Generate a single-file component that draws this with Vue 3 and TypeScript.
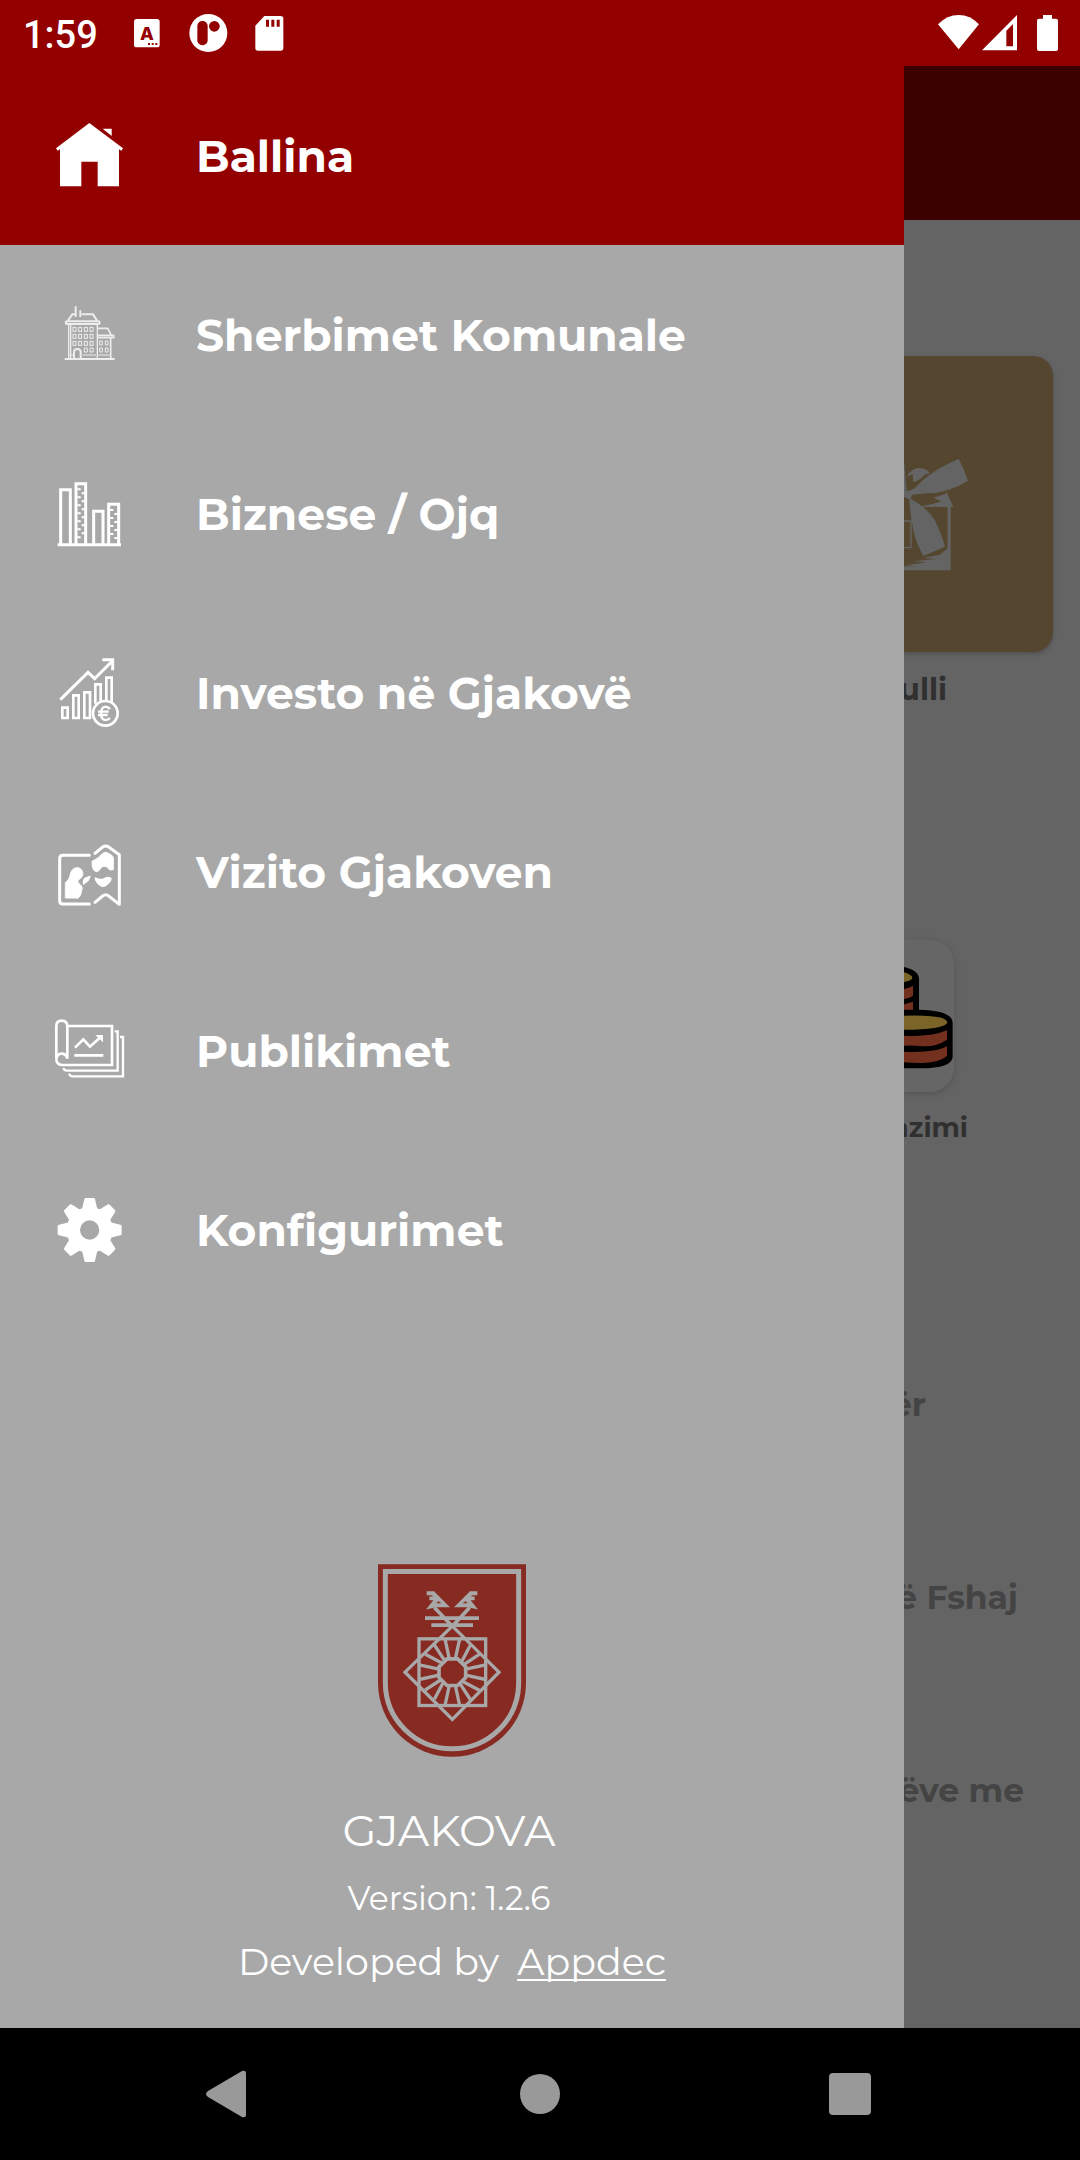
<script setup lang="ts">
interface MenuItem {
  id: string
  label: string
  viewBox: string
}

const items: MenuItem[] = [
  { id: 'home', label: 'Ballina', viewBox: '90 286 360 360' },
  { id: 'services', label: 'Sherbimet Komunale', viewBox: '0 -16 360 360' },
  { id: 'business', label: 'Biznese / Ojq', viewBox: '0 -20 360 360' },
  { id: 'invest', label: 'Investo në Gjakovë', viewBox: '0 -22 360 360' },
  { id: 'visit', label: 'Vizito Gjakoven', viewBox: '0 -25 360 360' },
  { id: 'publications', label: 'Publikimet', viewBox: '0 511 360 360' },
  { id: 'settings', label: 'Konfigurimet', viewBox: '0 1048 360 360' },
]

const active = 'home'
const teeth = [0, 45, 90, 135, 180, 225, 270, 315]
const quarters = [0, 90, 180, 270]
const windowRows = [141, 162, 183]
const windowCols = [129, 146, 163, 180]
</script>

<template>
  <div class="screen">
    <header class="status">
      <span class="clock">1:59</span>
      <svg class="s-app" viewBox="400 0 84 198" aria-hidden="true">
        <rect x="403" y="57" width="77" height="85" rx="8" fill="#fff" />
        <text x="442" y="120" text-anchor="middle" class="s-letter">A</text>
        <path d="M445 129h6v6h-6zM456 129h6v6h-6zM467 129h6v6h-6z" fill="#930000" />
      </svg>
      <svg class="s-round" viewBox="567 0 117 198" aria-hidden="true">
        <circle cx="625" cy="99" r="57" fill="#fff" />
        <rect x="592" y="63" width="31" height="73" rx="15" fill="#930000" />
        <circle cx="643" cy="79" r="16" fill="#930000" />
      </svg>
      <svg class="s-card" viewBox="765 0 87 198" aria-hidden="true">
        <path d="M793 48h49q8 0 8 8v88q0 8-8 8h-68q-8 0-8-8V77z" fill="#fff" />
        <path d="M798 59h9v21h-9zM814 59h9v21h-9zM830 59h9v21h-9z" fill="#930000" />
      </svg>
      <svg class="s-right" viewBox="174 0 363 198" aria-hidden="true">
        <path d="M174 73Q201 45 236 45T297 73L236 148z" fill="#fff" />
        <path d="M411 45V151H306zM399 72L379 92V139h20z" fill="#fff" fill-rule="evenodd" />
        <path d="M489 45h27v11h12q6 0 6 6v85q0 6-6 6h-51q-6 0-6-6V62q0-6 6-6h12z" fill="#fff" />
      </svg>
    </header>

    <div class="body">
      <aside class="drawer">
        <nav class="menu">
          <a v-for="item in items" :key="item.id" href="#" class="item" :class="{ active: item.id === active }">
            <svg class="icon" :viewBox="item.viewBox" aria-hidden="true">
              <g v-if="item.id === 'home'" fill="#fff">
                <path d="M268 367L369 443l-5 7-7-4V557H293V483H244V557H180V446l-7 4-5-7z" />
                <path d="M308 384h27v22z" />
              </g>

              <g v-else-if="item.id === 'services'" fill="none" stroke="#fff" stroke-width="6" opacity=".8">
                <path d="M137 78V110M151 90V110" />
                <path d="M113 122L127 102H137M155 102H189L202 122" />
                <rect x="107" y="123" width="102" height="8" rx="4" />
                <path d="M116 132V236M202 132V236M122 132V236" stroke-width="4" />
                <path d="M104 236H254" />
                <path d="M203 144H233L243 163M204 165H251V172H204M242 174V236" stroke-width="5" />
                <path d="M132 234V215q0-9 10-9t10 9V234" />
                <g stroke-width="3">
                  <template v-for="y in windowRows" :key="y">
                    <rect v-for="x in windowCols" :key="x" :x="x" :y="y" width="9" height="12" />
                  </template>
                  <path d="M163 203h9v12h-9zM180 203h9v12h-9zM209 182h8v12h-8zM226 182h8v12h-8zM209 203h8v12h-8zM226 203h8v12h-8zM118 224H130M158 224H198M206 224H238" />
                </g>
              </g>

              <g v-else-if="item.id === 'business'" fill="none" stroke="#fff" stroke-width="9">
                <path d="M83 252H273" />
                <path d="M92 252V87H121V252M138 252V69H167V252M191 252V152H219V252M236 252V131H266V252" />
                <path d="M142 86h10M155 98h12M142 110h10M155 122h12M142 134h10M155 146h12M142 158h10M155 170h12M142 182h10M155 194h12M142 206h10M155 218h12M142 230h10M240 148h10M253 160h12M240 172h10M253 184h12M240 196h10M253 208h12M240 220h10M253 232h12" stroke-width="6" />
              </g>

              <g v-else-if="item.id === 'invest'" fill="none" stroke="#fff" stroke-width="8">
                <path d="M91 178L174 96L194 115L247 62" stroke-width="9" />
                <path d="M217 58H248V90" stroke-width="9" />
                <path d="M97 202H113V233H97zM130 165H146V233H130zM163 156H180V233H163zM196 190V132H212V184M229 182V112H245V188" />
                <circle cx="226" cy="219" r="37" />
                <path d="M240 206q-8-9-18-6-9 4-9 20 0 14 9 18 10 3 18-5M204 214H236M204 224H233" stroke-width="7" />
              </g>

              <g v-else-if="item.id === 'visit'" fill="none" stroke="#fff" stroke-width="9" stroke-linecap="round" stroke-linejoin="round">
                <path d="M178 105H99q-10 0-10 10V241q0 10 10 10H178" />
                <path d="M195 99L218 80q9-6 18 0L268 103V252L236 227q-9-7-18 0L195 246" />
                <path d="M107 186q6-4 9-10 3-4 4-10c2-14 10-24 21-24 14 0 21 14 16 25-5 9-15 12-13 18 2 7 15 10 12 22-3 9-1 14-9 24-3 4-9 2-12 2H107z" fill="#fff" stroke-width="3" />
                <path d="M187 123Q208 112 217 100q10-8 20 0 16 6 13 22v26q-12 4-16-4-6-10-20-3c-6 12-13 15-20 11-8-8-9-22-7-29z" fill="#fff" stroke-width="3" />
                <path d="M196 173q16 7 24 3 12-7 22-3c4 6-12 25-22 25-14 0-25-19-24-25zM180 168l-5 12-14 11q-3-10 4-17z" fill="#fff" stroke-width="4" />
              </g>

              <g v-else-if="item.id === 'publications'" fill="none" stroke="#fff" stroke-width="7">
                <path d="M113 616H246V733H96q-17-1-17-18V616q0-16 16-16t17 16V714q-4-15-17-15-14 0-16 17" stroke-width="8" />
                <path d="M254 632H263V750H110q-9-2-9-8M270 649H279V767H127q-8-1-9-8" />
                <path d="M135 681L160 656L180 678L211 650M133 704H220" stroke-width="8" />
                <path d="M196 643H219V665z" fill="#fff" stroke="none" />
              </g>

              <g v-else>
                <circle cx="179" cy="1228" r="49" fill="none" stroke="#fff" stroke-width="40" />
                <path
                  v-for="angle in teeth"
                  :key="angle"
                  d="M156 1166L163 1136q1-4 5-4h22q4 0 5 4L202 1166z"
                  fill="#fff"
                  :transform="`rotate(${angle} 179 1228)`"
                />
              </g>
            </svg>
            <span>{{ item.label }}</span>
          </a>
        </nav>

        <footer class="about">
          <svg class="emblem" viewBox="51 42 444 578" role="img" aria-label="Gjakova">
            <path d="M51 42H495V398A222 222 0 0 1 51 398z" fill="#862a22" />
            <path d="M73 64H473V398A200 198 0 0 1 73 398z" fill="none" stroke="#a8a8a8" stroke-width="15" />
            <g fill="none" stroke="#a8a8a8" stroke-width="10">
              <rect x="174" y="266" width="200" height="200" />
              <path d="M274 228L414 366L274 508L132 366z" />
              <path d="M258 326H290L314 350V382L290 406H258L234 382V350z" stroke-width="11" />
              <path
                v-for="angle in quarters"
                :key="angle"
                d="M265 326L252 266M283 326L296 266M301 336L328 285M307 344L356 312"
                :transform="`rotate(${angle} 274 366)`"
              />
              <path d="M192 204H354M211 225H336M220 172L274 228M326 172L274 228" stroke-width="11" />
            </g>
            <g fill="#a8a8a8">
              <path d="M197 123H219L267 171H225L195 178L217 150H205V139H217L211 135H197z" />
              <path d="M349 123H327L279 171H321L351 178L329 150H341V139H329L335 135H349z" />
            </g>
            <path d="M225 159H241L233 153zM305 159H321L313 153z" fill="#862a22" />
          </svg>
          <p class="town">GJAKOVA</p>
          <p class="version">Version: 1.2.6</p>
          <p class="credit"><span>Developed by</span><a href="#">Appdec</a></p>
        </footer>
      </aside>

      <main class="page">
        <div class="appbar"></div>
        <section class="offer">
          <svg class="gift" viewBox="72 78 447 888" aria-hidden="true">
            <g fill="#646464">
              <path d="M72 390L80 484Q95 482 108 471Q150 423 236 387L250 415L264 452Q205 490 140 490L96 494L92 506Q138 530 164 570Q185 612 195 650L130 678Q108 640 100 600Q90 550 88 508L72 500z" />
              <path d="M80 440Q94 414 118 414Q140 415 149 430L134 434Q122 450 100 456L98 432z" />
              <path d="M200 486L220 531H118L166 520L184 514L160 503L194 493z" />
              <path d="M203 531H212V721H72V709H112L76 706L138 697L100 694L166 687L130 684L180 674L203 655z" />
            </g>
            <path d="M72 573H93V653H72" fill="none" stroke="#646464" stroke-width="4" />
          </svg>
        </section>
        <p class="caption offer-name">ulli</p>
        <section class="tile">
          <svg class="coins" viewBox="72 62 150 454" aria-hidden="true">
            <path d="M72 142Q117 152 117 178V270Q218 272 218 310V412Q214 446 124 446H72z" fill="#000" />
            <path d="M72 158Q97 166 97 174Q96 183 72 187zM72 288Q200 284 202 309Q190 330 72 330z" fill="#7b6428" />
            <path d="M72 208Q90 204 99 198V228Q90 235 72 238zM72 254L99 246V270H72zM72 348Q155 352 201 332V360Q165 384 120 379Q95 376 72 378zM72 396Q165 400 201 380V409Q175 430 124 430Q95 430 72 428z" fill="#74301f" />
          </svg>
        </section>
        <p class="caption tile-name">nzimi</p>
        <div class="news">
          <p class="n1">ër</p>
          <p class="n2">ë Fshaj</p>
          <p class="n3">ëve me</p>
        </div>
      </main>
    </div>

    <div class="sysnav">
      <button type="button" aria-label="Back">
        <svg viewBox="2 0 48 48"><path d="M42 3V45Q42 48 38 47L4 27Q0 24 4 21L38 1Q42 0 42 3z" /></svg>
      </button>
      <button type="button" aria-label="Home">
        <svg viewBox="0 0 48 48"><circle cx="24" cy="24" r="20" /></svg>
      </button>
      <button type="button" aria-label="Recent apps">
        <svg viewBox="0 0 48 48"><rect x="3" y="3" width="42" height="42" rx="4" /></svg>
      </button>
    </div>
  </div>
</template>

<style>
body {
  margin: 0;
}
</style>

<style scoped>
.screen {
  min-height: 100vh;
  display: flex;
  flex-direction: column;
  background: #646464;
  font-family: Montserrat, Inter, "Noto Sans", sans-serif;
  font-variant-ligatures: none;
}
p {
  margin: 0;
}
svg {
  display: block;
}
.status {
  height: 66px;
  display: flex;
  align-items: center;
  padding: 0 21px 0 23px;
  background: #930000;
  color: #fff;
}
.status svg {
  height: 66px;
  flex: none;
}
.clock {
  width: 110px;
  font: 500 38px/44px Roboto, sans-serif;
  padding-top: 4px;
}
.s-app {
  width: 28px;
}
.s-letter {
  font: 800 54px Inter, sans-serif;
  fill: #930000;
}
.s-round {
  width: 39px;
  margin-left: 28px;
}
.s-card {
  width: 29px;
  margin-left: 27px;
}
.s-right {
  width: 121px;
  margin-left: auto;
}
.body {
  flex: 1;
  display: flex;
}
.drawer {
  flex: 0 0 83.7%;
  display: flex;
  flex-direction: column;
  background: #a8a8a8;
  color: #fff;
}
.item {
  height: 179px;
  display: flex;
  align-items: center;
  gap: 46px;
  padding-left: 30px;
  color: #fff;
  font-size: 44px;
  line-height: 54px;
  font-weight: 700;
  text-decoration: none;
  white-space: nowrap;
}
.item.active {
  background: #930000;
}
.icon {
  width: 120px;
  height: 120px;
  flex: none;
}
.about {
  margin-top: auto;
  padding-bottom: 34px;
  display: flex;
  flex-direction: column;
  align-items: center;
  line-height: 64px;
  font-weight: 400;
}
.emblem {
  width: 148px;
  height: 193px;
  margin-bottom: 41px;
}
.town {
  padding-right: 6px;
  font-size: 44px;
  line-height: 64px;
  margin-bottom: 4px;
}
.version {
  padding-right: 6px;
  font-size: 33px;
}
.credit {
  display: flex;
  gap: 18px;
  font-size: 38px;
}
.credit a {
  color: #fff;
  text-decoration-thickness: 2px;
  text-underline-offset: 4px;
  text-decoration-skip-ink: none;
}
.page {
  flex: 1;
  min-width: 0;
  overflow: hidden;
  color: #303030;
  font-weight: 700;
}
.page p {
  display: flex;
  justify-content: flex-end;
  white-space: nowrap;
}
.appbar {
  height: 154px;
  background: #3b0000;
}
.offer {
  height: 296px;
  margin: 136px 27px 0 0;
  background: #54462f;
  border-radius: 0 20px 20px 0;
  box-shadow: 0 2px 4px #505050;
}
.gift {
  width: 149px;
  height: 296px;
}
.tile {
  width: 50px;
  height: 152px;
  background: #666;
  border-radius: 0 24px 24px 0;
  box-shadow: 0 2px 6px #555;
}
.coins {
  width: 50px;
  height: 152px;
}
.caption {
  line-height: 40px;
}
.offer-name {
  margin: 18px 0 230px;
  padding-right: 133px;
  font-size: 30px;
}
.tile-name {
  margin-top: 16px;
  padding-right: 112px;
  font-size: 27px;
}
.news {
  margin-top: 236px;
  display: grid;
  grid-template-columns: minmax(0, 1fr);
  gap: 153px;
  color: #444;
  font-size: 33px;
  line-height: 40px;
}
.n1 {
  padding-right: 154px;
}
.n2 {
  padding-right: 62px;
}
.n3 {
  padding-right: 56px;
}
.sysnav {
  height: 132px;
  display: flex;
  align-items: center;
  justify-content: center;
  gap: 190px;
  background: #000;
}
.sysnav button {
  width: 120px;
  height: 120px;
  padding: 0;
  border: 0;
  background: none;
  display: flex;
  align-items: center;
  justify-content: center;
}
.sysnav svg {
  width: 48px;
  height: 48px;
  fill: #999;
}
</style>
